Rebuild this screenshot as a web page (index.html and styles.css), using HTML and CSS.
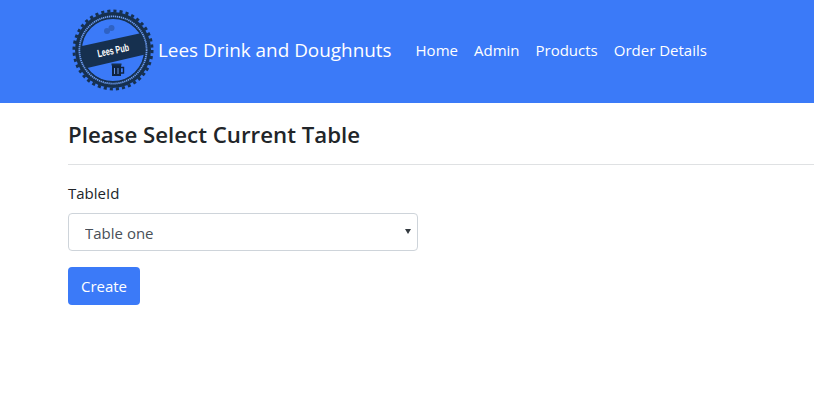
FILE: index.html
```html
<!DOCTYPE html>
<html>
<head>
    <meta charset="UTF-8">
    <title>Lees Drink and Doughnuts</title>
    <link rel="stylesheet" href="styles.css">
</head>
<body>
<header class="navbar">
    <svg class="logo" viewBox="0 0 82 82" aria-hidden="true">
        <defs>
            <clipPath id="badge-inner">
                <circle cx="41" cy="41" r="32"/>
            </clipPath>
        </defs>
        <circle cx="41" cy="41" r="38" fill="#16304f"/>
        <circle cx="41" cy="41" r="39" fill="none" stroke="#16304f" stroke-width="3" stroke-dasharray="3.1 3.03"/>
        <circle cx="41" cy="41" r="33.6" fill="none" stroke="#6c9bf0" stroke-width="1.8" stroke-dasharray="1.3 0.7"/>
        <circle cx="41" cy="41" r="31.6" fill="#3b7af8" stroke="#16304f" stroke-width="1.2"/>
        <g fill="#2f62c4">
            <circle cx="35" cy="22" r="3"/>
            <circle cx="39.500" cy="19" r="3"/>
        </g>
        <polygon points="6,38 74,23 79,44 11,60" fill="#16304f" clip-path="url(#badge-inner)"/>
        <text class="logo-text" x="41" y="45" text-anchor="middle" textLength="32" lengthAdjust="spacingAndGlyphs" transform="rotate(-12 41 41)">Lees Pub</text>
        <path d="M40 56h9v11h-9z" fill="#0f2340"/>
        <path d="M49 58.500h2.500v5.500H49" fill="none" stroke="#0f2340" stroke-width="1.400"/>
        <path d="M39.500 54.500h10v2h-10z" fill="#16304f"/>
        <path d="M42.500 59v6M46 59v6" stroke="#6c9bf0" stroke-width="0.900"/>
    </svg>
    <a class="brand" href="#">Lees Drink and Doughnuts</a>
    <nav class="nav-links">
        <a href="#">Home</a>
        <a href="#">Admin</a>
        <a href="#">Products</a>
        <a href="#">Order Details</a>
    </nav>
</header>

<section class="content">
    <h2>Please Select Current Table</h2>
    <hr>
    <form>
        <label for="table-id">TableId</label>
        <div class="select-wrap">
            <select id="table-id">
                <option>Table one</option>
            </select>
        </div>
        <button type="submit">Create</button>
    </form>
</section>
</body>
</html>
```

FILE: styles.css
```css
html, body {
    margin: 0;
    height: 100%;
}

body {
    font-family: "Open Sans", "Noto Sans", sans-serif;
    font-size: 15px;
    color: #212529;
    background-color: #ffffff;
    overflow: hidden;
}

.navbar {
    display: flex;
    align-items: center;
    height: 103px;
    padding-left: 72px;
    background-color: #3b7af8;
}

.logo {
    width: 82px;
    height: 82px;
    margin-top: -3px;
}

.logo-text {
    font-family: "Liberation Sans", sans-serif;
    font-size: 10.5px;
    font-weight: 700;
    fill: #ffffff;
}

.brand {
    margin-left: 4px;
    margin-bottom: 4px;
    font-size: 18.9px;
    color: #ffffff;
    text-decoration: none;
}

.nav-links {
    display: flex;
    gap: 16px;
    margin-left: 24px;
    margin-bottom: 4px;
}

.nav-links a {
    font-size: 15px;
    color: #ffffff;
    text-decoration: none;
}

.content {
    padding-left: 68px;
}

h2 {
    margin: 0;
    padding-top: 18px;
    font-size: 22.25px;
    line-height: 28px;
    font-weight: 600;
}

hr {
    margin: 15px 0 0;
    border: 0;
    border-top: 1px solid #dfe1e3;
}

label {
    display: block;
    margin-top: 17px;
    margin-bottom: 9px;
    line-height: 22px;
}

.select-wrap {
    position: relative;
    width: 350px;
}

.select-wrap::after {
    content: "";
    position: absolute;
    top: 16px;
    right: 7px;
    border-left: 3px solid transparent;
    border-right: 3px solid transparent;
    border-top: 5px solid #343a40;
}

select {
    display: block;
    width: 100%;
    height: 38px;
    padding: 2px 16px 0;
    font-family: inherit;
    font-size: 15px;
    color: #495057;
    background-color: #ffffff;
    border: 1px solid #ced4da;
    border-radius: 4px;
    appearance: none;
}

button {
    display: block;
    width: 72px;
    height: 38px;
    margin-top: 16px;
    font-family: inherit;
    font-size: 15px;
    color: #ffffff;
    background-color: #3b7af8;
    border: 0;
    border-radius: 4px;
}
```
